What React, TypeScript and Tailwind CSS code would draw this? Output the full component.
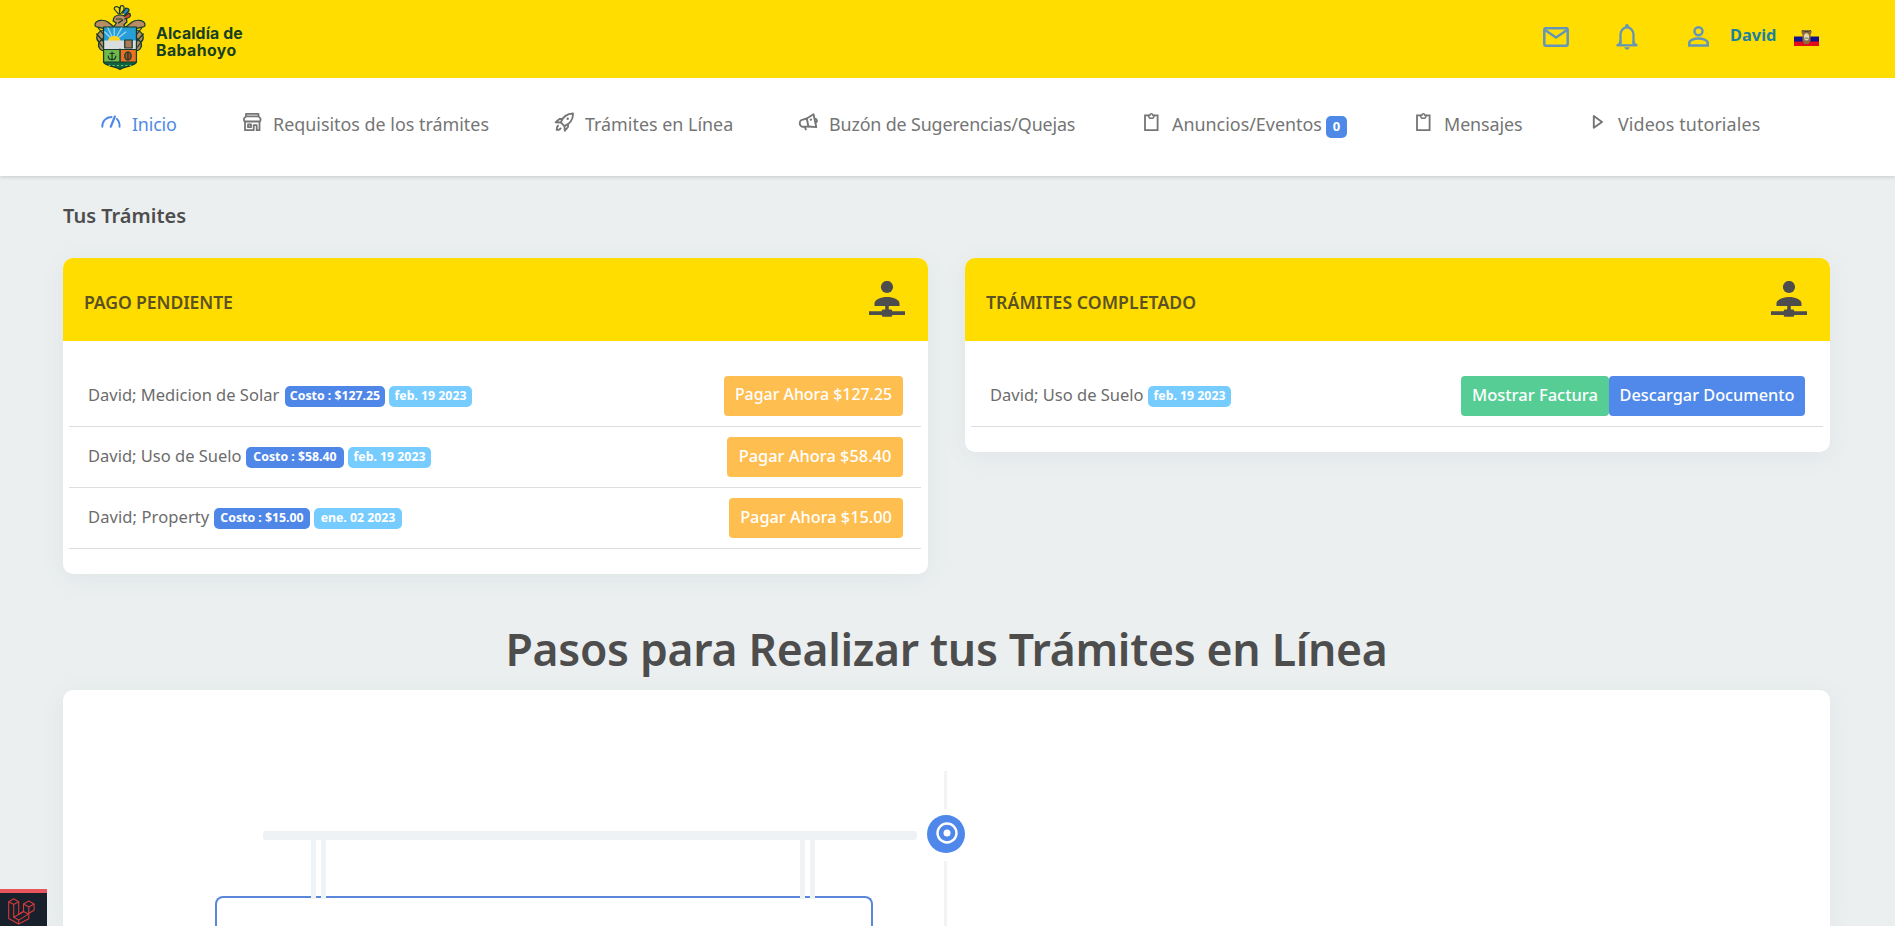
import React from 'react';
import type { ReactNode } from 'react';

function Crest() {
  return (
    <svg viewBox="0 0 51 66" preserveAspectRatio="none" className="h-[66px] w-[54px] shrink-0" fill="none" stroke="#173b2a" strokeWidth="1.2" strokeLinejoin="round" strokeLinecap="round">
      <path d="M12 26C6 21 1 25 2 20c1-4 8-5 12-2l6 5M10 26c-7 2-8 9-4 12-2 4 0 9 6 9M6 38l5-5M39 26c6-5 11-1 10-6-1-4-8-5-12-2l-6 5M41 26c7 2 8 9 4 12 2 4 0 9-6 9M45 38l-5-5" fill="#b98d63" />
      <path d="M5 24l6 8M3.500 30l6 7M4 36l5 7M46 24l-6 8M47.500 30l-6 7M47 36l-5 7" />
      <path d="M19 24l3-5-3-2c0-4 3-6 7-6s6 3 6 7l-3 3 3 4z" fill="#b98d63" />
      <path d="M22 15h5M24 19l4-3" />
      <path d="M24 10l-4-5c0-3 3-3 5-1v6M25 9l1-7c3-1 4 1 3 4l-3 4" fill="#ffdd00" />
      <path d="M28 9l3-5c3 0 4 2 2 4l-3 3" fill="#2d83c5" />
      <path d="M30 12l4-3c2 1 2 4-1 5l-3 1" fill="#d84335" />
      <path d="M10 23h31v35c0 4-11 4-15.500 7.500C21 62 10 62 10 58z" fill="#10653f" />
      <path d="M10.600 23.600h29.800V38H10.600z" fill="#279ed8" stroke="none" />
      <path d="M20 37l-9-9M20 37l-6-13M20 37V24M20 37l7-13M20 37l11-9" stroke="#9bd7ee" />
      <path d="M14 38c0-8 12-8 12 0z" fill="#ffd21c" stroke="none" />
      <path d="M10.600 36.500h29.800V45H10.600z" fill="#d9dde0" stroke="none" />
      <path d="M30 44v-8h7v8z" fill="#a97d5b" />
      <path d="M10 45.500h31" />
      <path d="M10.600 46h14.600v12H10.600z" fill="#72b84a" stroke="none" />
      <path d="M26 46h14.400v12H26z" fill="#e97024" stroke="none" />
      <path d="M10 58h31M25.500 45v13M18 48v8M14.500 52c0 5 7 5 7 0M16 49.500h4" />
      <ellipse cx="33" cy="52" rx="3" ry="4" fill="#a5512a" />
      <path d="M33 48v8" />
      <path d="M15 61.500h21" stroke="#78c27a" strokeDasharray="1 3" />
    </svg>
  );
}

function MailIcon() {
  return (
    <svg viewBox="0 0 26 20" className="h-5 w-[26px]" fill="none" stroke="#6395bb" strokeWidth="2.500" strokeLinejoin="round">
      <rect x="1.300" y="1.200" width="23.400" height="17.600" rx="1.500" />
      <path d="M2 3l11 7.500L24 3" />
    </svg>
  );
}

function BellIcon() {
  return (
    <svg viewBox="0 0 22 26" className="h-[26px] w-[22px]" fill="none" stroke="#6395bb" strokeWidth="2.300">
      <path d="M4.500 20.500v-10a6.500 7.200 0 0 1 13 0v10" />
      <path d="M.5 21.300h21" strokeWidth="2.200" />
      <path d="M4.500 17.500c0 2-1 2.500-2.500 3.500M17.500 17.500c0 2 1 2.500 2.500 3.500" />
      <circle cx="11" cy="2" r="1.900" fill="#6395bb" stroke="none" />
      <path d="M8.300 23.200h5.400c-.5 1.500-1.500 2.300-2.700 2.300s-2.200-.8-2.700-2.300z" fill="#6395bb" stroke="none" />
    </svg>
  );
}

function PersonIcon() {
  return (
    <svg viewBox="0 0 21 21" className="size-[21px]" fill="none" stroke="#6395bb" strokeWidth="2.500">
      <circle cx="10.500" cy="5.300" r="4" />
      <path d="M1.300 19.400v-2.500c0-2.700 5-4.400 9.200-4.400s9.200 1.700 9.200 4.400v2.500z" />
    </svg>
  );
}

function Flag() {
  return (
    <svg viewBox="0 0 25 17" className="-mt-[3px] h-[17px] w-[25px]">
      <path d="M0 0h25v8H0z" fill="#ffdd00" />
      <path d="M0 7.500h25V13H0z" fill="#10118f" />
      <path d="M0 12.500h25V17H0z" fill="#e30b17" />
      <path d="M7 2c2 1 3-1 5.500-1S16 3 18 2l-1.500 4v6l-2 3h-4l-2-3V6z" fill="#8a6a43" />
      <path d="M8 1.500l4.500 1 4.500-1" stroke="#3e3528" fill="none" />
      <ellipse cx="12.500" cy="7.800" rx="2.600" ry="3.600" fill="#e9d7a7" />
      <path d="M10.500 8.500h4v1.500h-4z" fill="#7c9c88" />
    </svg>
  );
}

function GaugeIcon() {
  return (
    <svg viewBox="0 0 20 20" className="size-5" fill="none" stroke="currentColor" strokeWidth="1.900" strokeLinecap="round">
      <path d="M1.300 14.800C1 9 5 5.200 10.500 5M15.800 6.800c2 2 3 4.700 2.800 8" />
      <path d="M13.800 4.600L9.800 14.700" strokeWidth="2.300" />
    </svg>
  );
}

function StoreIcon() {
  return (
    <svg viewBox="0 0 20 20" className="size-5" fill="none" stroke="currentColor" strokeWidth="1.800" strokeLinejoin="round">
      <path d="M4 1.800h12.500v2.500H4zM4 4.300L2 6.500v1.700c0 .8.700 1.300 1.500 1.300H17c.8 0 1.500-.5 1.500-1.300V6.500l-2-2.200z" />
      <path d="M3 9.500v8.700h8.700v-5h3v5h2.800V9.500" />
      <path d="M6 12.500h3v2.700H6z" />
    </svg>
  );
}

function RocketIcon() {
  return (
    <svg viewBox="0 0 20 20" className="size-5" fill="none" stroke="currentColor" strokeWidth="1.800" strokeLinejoin="round">
      <path d="M6.800 10.300C8.800 5 13 1.700 19 1.500c.2 6-3.500 10.500-8.600 12.700z" />
      <path d="M8.500 7h-3L1.700 10.300l5.100.2M14 12v3l-3.300 3.800-.2-4.800" />
      <path d="M4.700 13.500c-1.700.4-2 2.500-2 4.400 2 0 3.700-.5 4.200-2.200" />
      <circle cx="13.700" cy="6.800" r="1.200" fill="currentColor" stroke="none" />
    </svg>
  );
}

function MegaphoneIcon() {
  return (
    <svg viewBox="0 0 20 20" className="size-5" fill="none" stroke="currentColor" strokeWidth="1.900" strokeLinejoin="round">
      <path d="M8.800 6.500L15.500 2.300l2.800 12.800-7.900-.6" />
      <path d="M8.800 6.500l-4 1.100A3.600 3.600 0 0 0 6 14.800l4.400-.3z" />
      <path d="M6.800 15l1.300 3.200M17 6.800c2.200.3 2.500 2.800.8 3.600" />
      <path d="M12 8.200l1.800-1.100" />
    </svg>
  );
}

function ClipboardIcon() {
  return (
    <svg viewBox="0 0 20 20" className="size-5" fill="none" stroke="currentColor" strokeWidth="1.800">
      <path d="M7.500 3.400H4v14.800h12.600V3.400h-3.500" />
      <path d="M7.700 3.200h1.200c.2-2 2.700-2 2.900 0H13v1.600l-1.200 1.400H8.900L7.700 4.800z" strokeWidth="1.500" />
    </svg>
  );
}

function PlayIcon() {
  return (
    <svg viewBox="0 0 20 20" className="size-5" fill="none" stroke="currentColor" strokeWidth="1.900" strokeLinejoin="round">
      <path d="M6.800 4v11.800l8.200-5.900z" />
    </svg>
  );
}

function AccountNetworkIcon() {
  return (
    <svg viewBox="0 0 36 36" className="size-9" fill="#4d4d4d">
      <circle cx="18" cy="6" r="6.100" />
      <path d="M5.500 25v-2.600C5.500 18.600 12 16 18 16s12.500 2.600 12.500 6.400V25z" />
      <path d="M16.200 24h3.600v5h-3.600z" />
      <path d="M0 30.200h13v3.900H0zM23 30.200h13v3.900H23z" />
      <rect x="12.800" y="28.500" width="10.400" height="7.300" rx="1.300" />
    </svg>
  );
}

function LaravelIcon() {
  return (
    <svg viewBox="0 0 27 27" className="size-[27px]" fill="none" stroke="#d23b3b" strokeWidth="1.100" strokeLinejoin="round">
      <path d="M.7 3.700L5.700.8l5 2.900v12.600l4.800-2.800V6l5.300-3 5.300 3v6.200l-5.300 3v5.500L10.700 26 .7 20.500z" />
      <path d="M.7 3.700l5 2.900 5-2.900M5.700 6.600v12.700l5 2.800V26M10.700 22.100l10.100-6.200V9M15.500 6l5.300 3 5.300-3M5.700 19.300l9.800-5.800 5.300 2.800" />
    </svg>
  );
}

type NavItemProps = { icon: ReactNode; label: string; labelClass: string; active?: boolean; count?: number };

function NavItem({ icon, label, labelClass, active = false, count }: NavItemProps) {
  return (
    <a className={`flex h-[30px] shrink-0 items-center whitespace-nowrap text-[17.900px] leading-[30px] ${active ? 'text-[#4f89e8]' : 'text-[#757575]'}`}>
      <span className="mr-[11px] -mt-1">{icon}</span>
      <span className={labelClass}>{label}</span>
      {count !== undefined && (
        <span className="ml-[5px] mt-[5px] flex h-[22px] w-[21px] items-center justify-center rounded-[5px] bg-[#4f89e8] pb-0.5 text-[13px] font-bold text-white">{count}</span>
      )}
    </a>
  );
}

function Badge({ tone, className, children }: { tone: 'cost' | 'date'; className: string; children: ReactNode }) {
  return (
    <span className={`ml-1 mt-px flex h-[21px] items-center justify-center rounded-[5px] text-[12.300px] font-bold text-white ${tone === 'cost' ? 'bg-[#4f87e8]' : 'bg-[#77ccff]'} ${className}`}>
      {children}
    </span>
  );
}

function Row({ name, nameClass, children, actions }: { name: string; nameClass: string; children: ReactNode; actions: ReactNode }) {
  return (
    <li className="flex h-[61px] items-center whitespace-nowrap border-b border-[#dcdfe1] pl-[19px] pr-[18px]">
      <span className={`-mt-0.5 text-[16.500px] text-[#6c6c6c] ${nameClass}`}>{name}</span>
      {children}
      <div className="ml-auto flex">{actions}</div>
    </li>
  );
}

function Button({ tone, className, children }: { tone: 'pay' | 'invoice' | 'document'; className: string; children: ReactNode }) {
  const tones = { pay: 'bg-[#ffbe50]', invoice: 'bg-[#56cd95]', document: 'bg-[#5189ea]' };
  return (
    <button className={`flex h-10 items-center justify-center rounded pb-0.5 font-medium text-white ${tones[tone]} ${className}`}>
      {children}
    </button>
  );
}

function Card({ title, titleClass, children }: { title: string; titleClass: string; children: ReactNode }) {
  return (
    <section className="w-[865px] overflow-hidden rounded-[10px] bg-white shadow-[0_4px_25px_rgba(80,100,110,0.07)]">
      <header className="flex h-[83px] items-center justify-between bg-[#ffdd00] pl-[21px] pr-[23px]">
        <h3 className={`mt-[5px] whitespace-nowrap text-[17.600px] font-semibold text-[#5b5122] ${titleClass}`}>{title}</h3>
        <span className="-mt-0.5">
          <AccountNetworkIcon />
        </span>
      </header>
      <ul className="py-[25px] pl-1.5 pr-[7px]">{children}</ul>
    </section>
  );
}

const pending = [
  { name: 'David; Medicion de Solar', nameClass: 'w-[193px]', cost: 'Costo : $127.25', costClass: 'w-[100px]', date: 'feb. 19 2023', dateClass: 'w-[83px]', pay: 'Pagar Ahora $127.25', payClass: 'w-[179px] text-[15.900px]' },
  { name: 'David; Uso de Suelo', nameClass: 'w-[154px]', cost: 'Costo : $58.40', costClass: 'w-[98px]', date: 'feb. 19 2023', dateClass: 'w-[83px]', pay: 'Pagar Ahora $58.40', payClass: 'w-[176px] text-[16.400px]' },
  { name: 'David; Property', nameClass: 'w-[122px] tracking-[0.100px]', cost: 'Costo : $15.00', costClass: 'w-[96px]', date: 'ene. 02 2023', dateClass: 'w-[88px]', pay: 'Pagar Ahora $15.00', payClass: 'w-[174px] text-[16.300px]' },
];

function Hanger() {
  return (
    <div className="flex h-[59px] gap-[5px]">
      <span className="w-[5px] bg-[#f0f3f5]" />
      <span className="w-[5px] bg-[#f0f3f5]" />
    </div>
  );
}

function Timeline() {
  return (
    <section className="flex h-[236px] rounded-t-[10px] bg-white pl-[152px] pt-[81px] shadow-[0_4px_25px_rgba(80,100,110,0.07)]">
      <div className="w-[702px] pt-[60px]">
        <div className="ml-12 h-[9px] w-[654px] rounded-[3px] bg-[#eef2f4]" />
        <div className="relative z-10 flex justify-between pl-[96px] pr-[102px]">
          <Hanger />
          <Hanger />
        </div>
        <div className="-mt-[3px] h-[30px] w-[658px] rounded-t-lg border-2 border-b-0 border-[#5a87d9]" />
      </div>
      <div className="ml-[10px] flex w-[38px] flex-col items-center">
        <span className="mr-px h-[38px] w-[3px] bg-[#f1f3f5]" />
        <span className="my-1.5 flex size-[38px] shrink-0 items-center justify-center rounded-full bg-[#4f87ea]">
          <svg viewBox="0 0 22 22" className="mb-[3px] ml-px size-[22px]" fill="none" stroke="white" strokeWidth="2.400">
            <circle cx="11" cy="11" r="9.500" />
            <circle cx="11" cy="11" r="3.500" fill="white" stroke="none" />
          </svg>
        </span>
        <span className="mr-px mt-0.5 w-[3px] flex-1 bg-[#f1f3f5]" />
      </div>
    </section>
  );
}

export default function App() {
  return (
    <div className="relative h-[926px] w-[1895px] overflow-hidden bg-[#ebeff0] font-['Noto_Sans',sans-serif]">
      <div className="shadow-[0_1px_4px_rgba(0,0,0,0.16)]">
        <header className="flex h-[78px] items-center bg-[#ffdd00] pl-[93px] pr-[76px]">
          <div className="-mt-1 flex items-center gap-[9px]">
            <Crest />
            <div className="mt-[10px] whitespace-nowrap font-[Inter] text-[15.800px] font-bold leading-[17px] tracking-[0.120px] text-[#173f20]">
              <p>Alcaldía de</p>
              <p className="tracking-[0.450px]">Babahoyo</p>
            </div>
          </div>
          <div className="ml-auto flex items-center">
            <span className="mr-[47px] -mt-1"><MailIcon /></span>
            <span className="mr-[50px] -mt-1"><BellIcon /></span>
            <span className="mr-[21px] -mt-[5px]"><PersonIcon /></span>
            <span className="mr-[18px] -mt-2 w-[46px] whitespace-nowrap text-[16.400px] font-bold text-[#1c829c]">David</span>
            <Flag />
          </div>
        </header>
        <nav className="flex h-[98px] gap-[66px] bg-white pl-[101px] pt-[31px]">
          <NavItem active icon={<GaugeIcon />} label="Inicio" labelClass="w-[44px] tracking-[-0.200px]" />
          <NavItem icon={<StoreIcon />} label="Requisitos de los trámites" labelClass="w-[215px]" />
          <NavItem icon={<RocketIcon />} label="Trámites en Línea" labelClass="w-[147px]" />
          <NavItem icon={<MegaphoneIcon />} label="Buzón de Sugerencias/Quejas" labelClass="w-[246px] tracking-[-0.150px]" />
          <NavItem icon={<ClipboardIcon />} label="Anuncios/Eventos" labelClass="w-[149px]" count={0} />
          <NavItem icon={<ClipboardIcon />} label="Mensajes" labelClass="w-[77px] tracking-[-0.100px]" />
          <NavItem icon={<PlayIcon />} label="Videos tutoriales" labelClass="w-[141px] tracking-[0.100px]" />
        </nav>
      </div>

      <main className="pl-[63px] pr-[65px] pt-6">
        <h2 className="h-[58px] text-[20px] font-semibold leading-[32px] text-[#4d4d4d]">Tus Trámites</h2>
        <div className="flex h-[316px] items-start gap-[37px]">
          <Card title="PAGO PENDIENTE" titleClass="tracking-[-0.100px]">
            {pending.map((p) => (
              <Row key={p.name} name={p.name} nameClass={p.nameClass} actions={<Button tone="pay" className={p.payClass}>{p.pay}</Button>}>
                <Badge tone="cost" className={p.costClass}>{p.cost}</Badge>
                <Badge tone="date" className={p.dateClass}>{p.date}</Badge>
              </Row>
            ))}
          </Card>
          <Card title="TRÁMITES COMPLETADO" titleClass="tracking-[0.080px]">
            <Row
              name="David; Uso de Suelo"
              nameClass="w-[154px]"
              actions={
                <>
                  <Button tone="invoice" className="w-[148px] text-[16.500px]">Mostrar Factura</Button>
                  <Button tone="document" className="w-[196px] text-[16.300px]">Descargar Documento</Button>
                </>
              }
            >
              <Badge tone="date" className="w-[83px]">feb. 19 2023</Badge>
            </Row>
          </Card>
        </div>
        <h1 className="h-[116px] whitespace-nowrap pt-[45px] text-center text-[44.500px] font-semibold leading-[60px] tracking-[-0.300px] text-[#4d4d4d]">
          Pasos para Realizar tus Trámites en Línea
        </h1>
        <Timeline />
      </main>

      <div className="absolute bottom-0 left-0 z-20 flex h-[37px] w-[47px] border-t-4 border-[#e8555c] bg-[#18202c] pl-2 pt-[5px]">
        <LaravelIcon />
      </div>
    </div>
  );
}
